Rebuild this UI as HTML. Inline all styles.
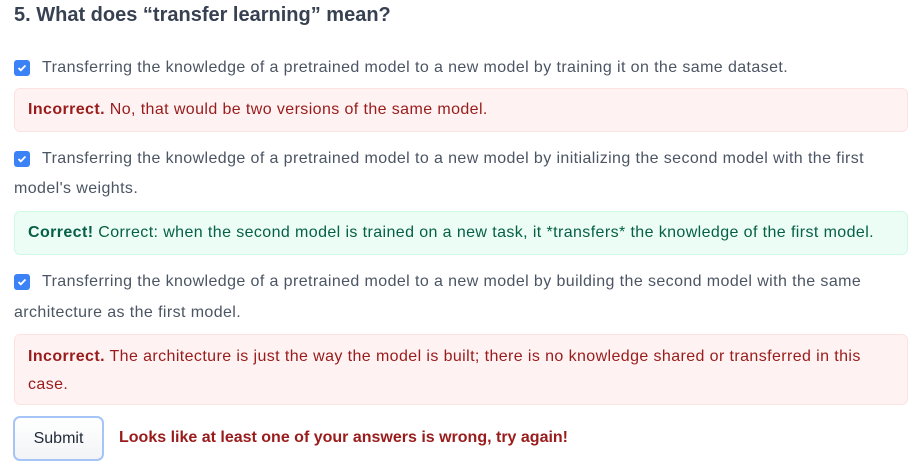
<!DOCTYPE html><html><head><style>
body{margin:0;width:921px;height:472px;background:#fff;font-family:"Liberation Sans",sans-serif;color:#4b5563;overflow:hidden;position:relative}
.a{position:absolute;white-space:nowrap}
h1{position:absolute;left:14px;top:4px;margin:0;font-size:20px;font-weight:bold;color:#374151}
.cb{position:absolute;left:14px;width:16px;height:16px;background:#3b82f6;border-radius:3px}
.cb svg{position:absolute;left:2px;top:2px}
.t{font-size:16px;letter-spacing:.4px;color:#4b5563}
.box{position:absolute;left:14px;width:894px;border-radius:6px;box-sizing:border-box;font-size:16px;letter-spacing:.4px;padding:0 13px;line-height:28px;white-space:nowrap}
.bad{background:#fef2f2;border:1px solid #fde2e2;color:#991b1b}
.good{background:#ecfdf5;border:1px solid #d1fae5;color:#065f46}
.btn{position:absolute;left:13px;top:416px;width:91px;height:45px;box-sizing:border-box;border:2px solid #a5c4f7;border-radius:7px;background:linear-gradient(#fff,#f3f4f6);font-size:16px;color:#1f2937;text-align:center;line-height:41px}
</style></head><body>
<h1>5. What does “transfer learning” mean?</h1>
<div class="cb" style="top:60px"><svg width="12" height="12" viewBox="0 0 12 12"><path d="M2.5 6l2.3 2.3L9.5 3.5" stroke="#fff" stroke-width="1.8" fill="none"/></svg></div>
<div class="a t" style="left:42px;top:59px">Transferring the knowledge of a pretrained model to a new model by training it on the same dataset.</div>
<div class="box bad" style="top:88px;height:44px;padding-top:7px"><b>Incorrect.</b> No, that would be two versions of the same model.</div>
<div class="cb" style="top:151px"><svg width="12" height="12" viewBox="0 0 12 12"><path d="M2.5 6l2.3 2.3L9.5 3.5" stroke="#fff" stroke-width="1.8" fill="none"/></svg></div>
<div class="a t" style="left:42px;top:150px">Transferring the knowledge of a pretrained model to a new model by initializing the second model with the first</div>
<div class="a t" style="left:14px;top:180px">model's weights.</div>
<div class="box good" style="top:211px;height:44px;padding-top:7px"><b>Correct!</b> Correct: when the second model is trained on a new task, it *transfers* the knowledge of the first model.</div>
<div class="cb" style="top:274px"><svg width="12" height="12" viewBox="0 0 12 12"><path d="M2.5 6l2.3 2.3L9.5 3.5" stroke="#fff" stroke-width="1.8" fill="none"/></svg></div>
<div class="a t" style="left:42px;top:273px">Transferring the knowledge of a pretrained model to a new model by building the second model with the same</div>
<div class="a t" style="left:14px;top:304px">architecture as the first model.</div>
<div class="box bad" style="top:334px;height:71px;padding-top:8px"><b>Incorrect.</b> The architecture is just the way the model is built; there is no knowledge shared or transferred in this<br>case.</div>
<div class="btn">Submit</div>
<div class="a" style="left:119px;top:429px;font-size:16px;font-weight:bold;color:#991b1b">Looks like at least one of your answers is wrong, try again!</div>
</body></html>
